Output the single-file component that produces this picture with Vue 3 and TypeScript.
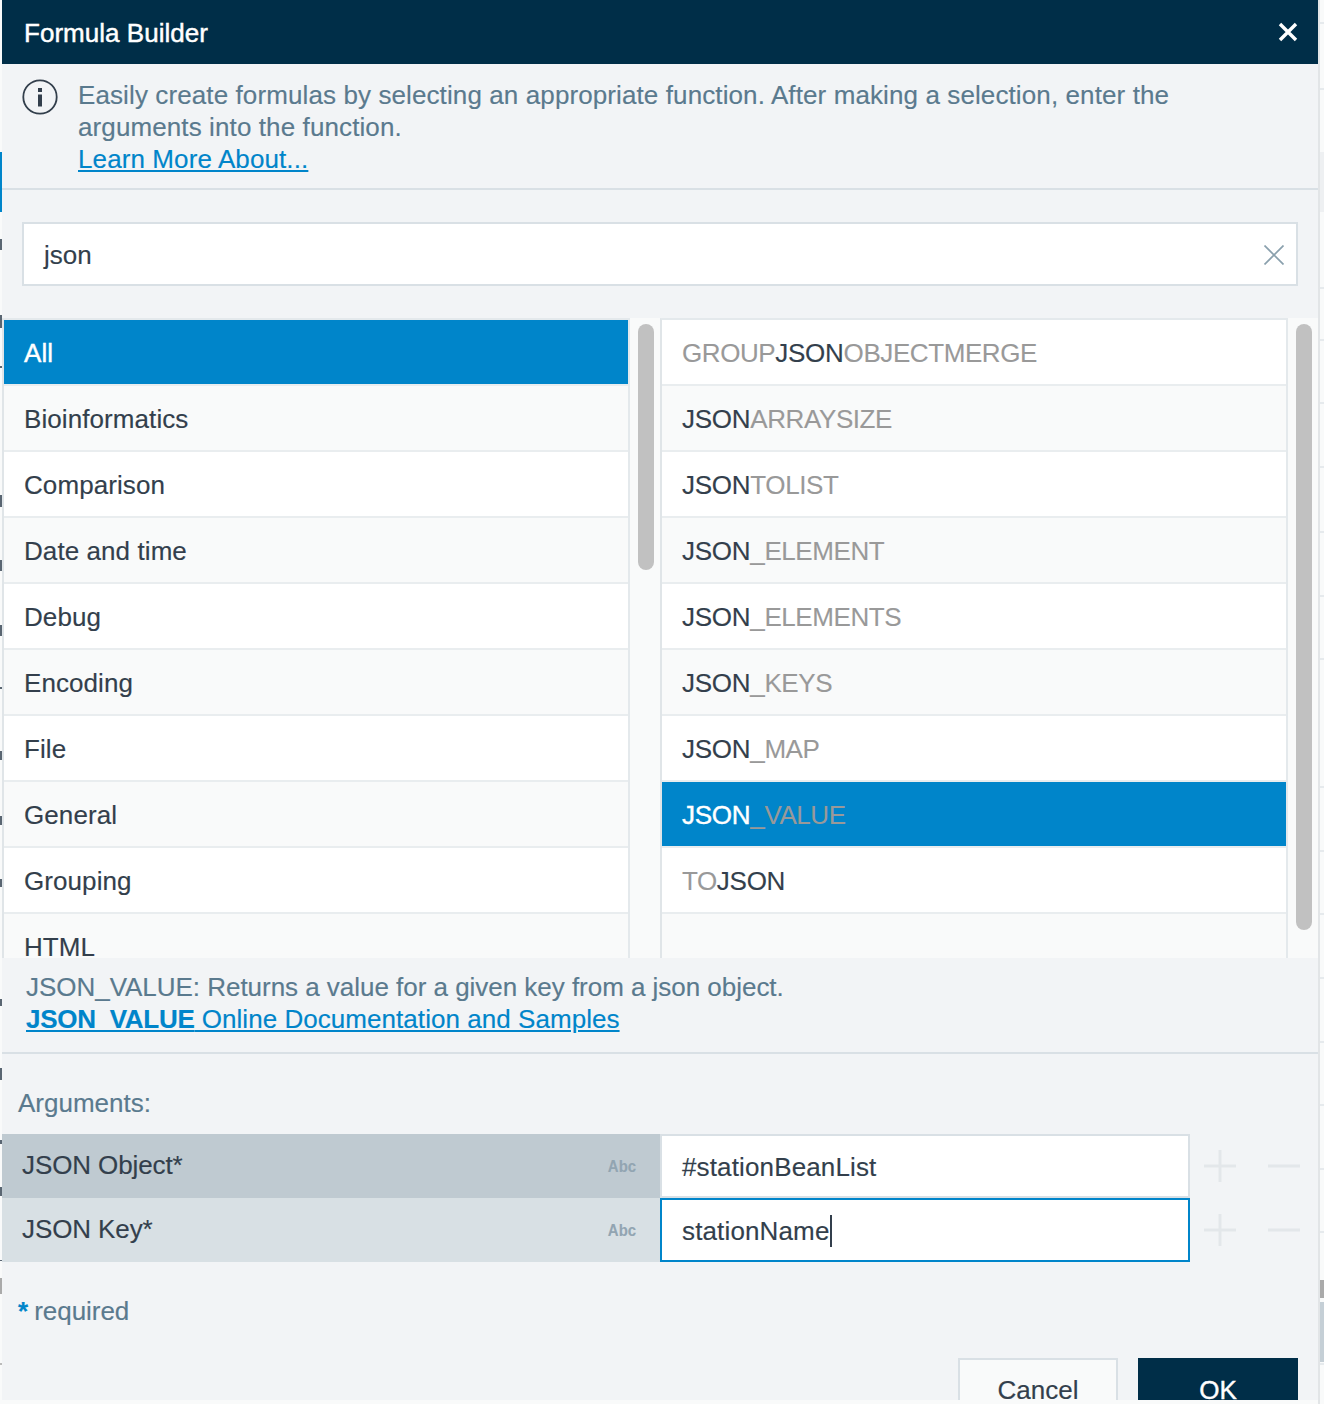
<script setup lang="ts">
const categories: string[] = ['All', 'Bioinformatics', 'Comparison', 'Date and time', 'Debug', 'Encoding', 'File', 'General', 'Grouping', 'HTML']
type Part = { t: string; m: boolean }
const p = (t: string, m = false): Part => ({ t, m })
const functions: { parts: Part[]; selected?: boolean }[] = [
  { parts: [p('GROUP'), p('JSON', true), p('OBJECTMERGE')] },
  { parts: [p('JSON', true), p('ARRAYSIZE')] },
  { parts: [p('JSON', true), p('TOLIST')] },
  { parts: [p('JSON', true), p('_ELEMENT')] },
  { parts: [p('JSON', true), p('_ELEMENTS')] },
  { parts: [p('JSON', true), p('_KEYS')] },
  { parts: [p('JSON', true), p('_MAP')] },
  { parts: [p('JSON', true), p('_VALUE')], selected: true },
  { parts: [p('TO'), p('JSON', true)] },
  { parts: [] }
]
const args = [
  { label: 'JSON Object*', value: '#stationBeanList', active: false },
  { label: 'JSON Key*', value: 'stationName', active: true }
]
// Fragments of the page behind the modal that show at its two edges
const leftBits: [number, number, string][] = [
  [152, 60, '#0085ca'], [239, 11, '#5a6672'], [315, 13, '#5a6672'], [366, 2, '#5a6672'], [495, 12, '#5a6672'],
  [560, 11, '#5a6672'], [625, 11, '#5a6672'], [687, 2, '#5a6672'], [751, 9, '#5a6672'], [816, 9, '#5a6672'],
  [879, 8, '#5a6672'], [999, 7, '#5a6672'], [1068, 12, '#5a6672'], [1140, 4, '#5a6672'], [1187, 9, '#5a6672'],
  [1260, 1, '#5a6672'], [1278, 16, '#aaaaaa'], [1363, 2, '#bbbbbb']
]
const rightLines = [22, 88, 287, 339, 402, 466, 531, 595, 658, 786, 850, 913, 977, 1041, 1104, 1168, 1231, 1285, 1363]
const rightBits: [number, number, string][] = [
  ...rightLines.map((t): [number, number, string] => [t, 2, '#e6eaed']),
  [152, 60, '#eef0f2'], [1280, 18, '#aaaaaa'], [1302, 60, '#c5cfd6']
]
</script>

<template>
  <div class="page">
    <i v-for="b in leftBits" :key="'l' + b[0]" class="bit bit-left" :style="{ top: b[0] + 'px', height: b[1] + 'px', background: b[2] }"></i>
    <i v-for="b in rightBits" :key="'r' + b[0]" class="bit bit-right" :style="{ top: b[0] + 'px', height: b[1] + 'px', background: b[2] }"></i>
    <section class="dialog">
      <header class="title">
        <span>Formula Builder</span>
        <svg class="close" width="20" height="20" viewBox="0 0 20 20"><path d="M2 2 18 18M18 2 2 18" stroke="#fff" stroke-width="3.4" fill="none" /></svg>
      </header>
      <div class="intro">
        <svg class="info" width="36" height="36" viewBox="0 0 36 36">
          <circle cx="18" cy="18" r="16.7" fill="none" stroke="#333f4c" stroke-width="1.8" />
          <rect x="16" y="9" width="4" height="4" fill="#333f4c" />
          <rect x="16" y="15.5" width="4" height="12" fill="#333f4c" />
        </svg>
        <p>Easily create formulas by selecting an appropriate function. After making a selection, enter the arguments into the function.<br /><a>Learn More About...</a></p>
      </div>
      <div class="search">
        <span>json</span>
        <svg width="20" height="20" viewBox="0 0 20 20"><path d="M.5.5 19.5 19.5M19.5.5.5 19.5" stroke="#8aa0ad" stroke-width="1.7" fill="none" /></svg>
      </div>
      <div class="lists">
        <div class="column">
          <ul class="list categories">
            <li v-for="c in categories" :key="c" :class="{ selected: c === 'All' }">{{ c }}</li>
          </ul>
          <div class="track"><div class="thumb thumb-left"></div></div>
        </div>
        <div class="column">
          <ul class="list">
            <li v-for="(f, i) in functions" :key="i" :class="{ selected: f.selected }">
              <span v-for="part in f.parts" :key="part.t" :class="part.m ? 'match' : 'rest'">{{ part.t }}</span>
            </li>
          </ul>
          <div class="track"><div class="thumb thumb-right"></div></div>
        </div>
      </div>
      <div class="description">
        <p>JSON_VALUE: Returns a value for a given key from a json object.</p>
        <a><b>JSON_VALUE</b> Online Documentation and Samples</a>
      </div>
      <div class="arguments">
        <div class="args-title">Arguments:</div>
        <div v-for="a in args" :key="a.label" class="arg-row">
          <div class="arg-label" :class="{ dim: a.active }">
            <span>{{ a.label }}</span><small>Abc</small>
          </div>
          <div class="arg-input" :class="{ active: a.active }">{{ a.value }}<i v-if="a.active" class="caret"></i></div>
          <div class="arg-actions">
            <svg width="32" height="32" viewBox="0 0 32 32"><path d="M16 0V32M0 16H32" stroke="#e3e7ea" stroke-width="3" /></svg>
            <svg width="32" height="32" viewBox="0 0 32 32"><path d="M0 16H32" stroke="#e3e7ea" stroke-width="3" /></svg>
          </div>
        </div>
        <div class="required"><em>*</em> required</div>
      </div>
      <footer class="footer">
        <button class="cancel">Cancel</button>
        <button class="ok">OK</button>
      </footer>
    </section>
  </div>
</template>

<style>
html, body { margin: 0; background: #fff; }
</style>

<style scoped>
.page { position: relative; width: 1324px; height: 1404px; overflow: hidden; padding: 0 0 0 2px; box-sizing: border-box; background: #f9fafa; font-family: "Liberation Sans", Arial, sans-serif; }
.bit { position: absolute; display: block; }
.bit-left { left: 0; width: 2px; }
.bit-right { left: 1320px; width: 4px; }
.dialog { position: relative; width: 1316px; height: 1400px; overflow: hidden; background: #f2f4f6; color: #333f4c; font-size: 26px; display: flex; flex-direction: column; -webkit-text-stroke: .15px currentColor; }
.page::after { content: ""; position: absolute; left: 1318px; top: 0; width: 2px; height: 1404px; background: #e2e5e7; }
.title { flex: none; height: 64px; box-sizing: border-box; background: #002e48; color: #fff; display: flex; justify-content: space-between; align-items: center; padding: 2px 20px 0 22px; -webkit-text-stroke: .45px #fff; letter-spacing: .03px; }
.close { margin-top: -2px; }
.intro { flex: none; height: 126px; box-sizing: border-box; display: flex; gap: 20px; padding: 15px 20px 0 20px; border-bottom: 2px solid #d9e0e5; color: #5a7a8e; line-height: 32px; letter-spacing: .105px; }
.info { flex: none; }
.intro p { margin: 0; width: 1125px; }
a { color: #0085ca; text-decoration: underline; }
.search { flex: none; height: 64px; box-sizing: border-box; margin: 32px 20px; background: #fff; border: 2px solid #d9e0e5; padding: 2px 12px 0 20px; display: flex; justify-content: space-between; align-items: center; }
.lists { flex: none; height: 640px; display: flex; overflow: hidden; }
.column { width: 658px; display: flex; }
.list { list-style: none; margin: 0; padding: 0; width: 624px; box-sizing: content-box; border-left: 2px solid #e0e5e8; border-top: 2px solid #e4e9ec; border-right: 2px solid #e4e9ec; flex: none; }
.list li { height: 64px; line-height: 66px; padding-left: 20px; border-bottom: 2px solid #e9edef; background: #fff; }
.list li:nth-child(even) { background: #f9fafa; }
.list li.selected { background: #0085ca; color: #fff; -webkit-text-stroke: .4px #fff; }
.categories li { letter-spacing: .08px; }
.rest { color: #999; letter-spacing: -.42px; -webkit-text-stroke: .1px #999; }
.match { color: #333f4c; letter-spacing: -.25px; }
.selected .match { color: #fff; }
.track { flex: 1; background: #f9fafa; position: relative; }
.thumb { position: absolute; left: 8px; top: 6px; width: 16px; border-radius: 8px; background: #c1c1c1; }
.thumb-left { height: 246px; }
.thumb-right { height: 606px; }
.description { flex: none; height: 96px; box-sizing: border-box; padding: 13px 24px 0; border-bottom: 2px solid #d9e0e5; color: #5a7a8e; line-height: 32px; }
.description p { margin: 0; letter-spacing: -.03px; }
.description a { letter-spacing: .05px; }
.description b { letter-spacing: -.3px; }
.arguments { flex: none; padding-top: 33px; }
.args-title { padding-left: 16px; line-height: 32px; height: 47px; color: #5a7a8e; }
.arg-row { display: flex; height: 64px; }
.arg-label { width: 658px; box-sizing: border-box; background: #bfcad1; padding: 0 24px 2px 20px; display: flex; align-items: center; justify-content: space-between; }
.arg-label span { letter-spacing: -.1px; }
.arg-label.dim { background: #d8e0e4; }
.arg-label small { font-size: 17px; font-weight: 700; color: #92a5b2; transform: scaleX(.88); transform-origin: right center; -webkit-text-stroke: .1px #92a5b2; margin-top: 3px; }
.arg-input { width: 530px; box-sizing: border-box; background: #fff; border: 2px solid #d9e0e5; padding: 2px 0 0 20px; display: flex; align-items: center; letter-spacing: .14px; }
.arg-input.active { border-color: #0085ca; }
.caret { display: inline-block; width: 2px; height: 32px; background: #333f4c; }
.arg-actions { display: flex; gap: 32px; padding-left: 14px; align-items: center; }
.required { margin-top: 33px; padding-left: 16px; color: #5a7a8e; line-height: 32px; letter-spacing: -.05px; }
.required em { color: #0085ca; font-style: normal; font-weight: 700; margin-right: -1px; }
.footer { display: flex; justify-content: flex-end; gap: 20px; padding: 0 20px; margin-top: 31px; }
button { font: inherit; height: 84px; padding: 0 0 20px; box-sizing: border-box; }
.cancel { width: 160px; background: #f9fafa; border: 2px solid #d9e0e5; color: #333f4c; }
.ok { width: 160px; background: #002e48; border: 0; color: #fff; -webkit-text-stroke: .4px #fff; }
</style>
